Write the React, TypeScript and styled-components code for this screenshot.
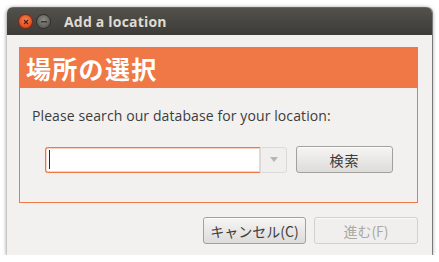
import React from "react";
import styled, { createGlobalStyle } from "styled-components";

const Global = createGlobalStyle`
  html, body {
    margin: 0;
    padding: 0;
    background: #ffffff;
    font-family: "Open Sans", "Noto Sans CJK JP", sans-serif;
  }
`;

const Window = styled.div`
  margin: 7px 0 0 7px;
  width: 425px;
  height: 248px;
  display: flex;
  flex-direction: column;
  border-radius: 6px 6px 0 0;
  box-shadow: 0 1px 4px rgba(0, 0, 0, 0.55), 1px 0 0 #9c9c9a;
  overflow: hidden;
`;

const TitleBar = styled.div`
  height: 28px;
  flex: none;
  display: flex;
  align-items: center;
  padding-left: 11px;
  background: linear-gradient(#52514c, #3c3b37);
  border-top: 1px solid #66655f;
  box-sizing: border-box;
`;

const WinButton = styled.div<{ $close?: boolean }>`
  width: 15px;
  height: 15px;
  border-radius: 50%;
  margin-right: 3px;
  display: flex;
  align-items: center;
  justify-content: center;
  box-sizing: border-box;
  border: 1px solid ${(p) => (p.$close ? "#7a2a12" : "#2e2d2a")};
  background: ${(p) =>
    p.$close
      ? "radial-gradient(circle at 50% 40%, #f58a5c, #df4a1c 70%)"
      : "radial-gradient(circle at 50% 40%, #8d8c86, #5f5e5a 70%)"};
`;

const Title = styled.span`
  margin-left: 10px;
  color: #dfdbd2;
  font-family: "Open Sans", sans-serif;
  font-weight: 700;
  font-size: 14px;
  letter-spacing: 0.2px;
`;

const Body = styled.div`
  flex: 1;
  background: #f2f1f0;
  padding: 12px 14px 13px 12px;
  display: flex;
  flex-direction: column;
`;

const Frame = styled.div`
  height: 154px;
  border: 1px solid #f07746;
  display: flex;
  flex-direction: column;
`;

const Header = styled.div`
  height: 40px;
  background: #f07746;
  color: #ffffff;
  font-family: "Noto Sans CJK JP", sans-serif;
  font-weight: 700;
  font-size: 25px;
  line-height: 40px;
  padding-left: 6px;
  letter-spacing: 1.3px;
`;

const Prompt = styled.div`
  margin: 19px 0 0 12px;
  font-size: 14px;
  line-height: 18px;
  letter-spacing: 0.1px;
  color: #3c3c3c;
`;

const SearchRow = styled.div`
  display: flex;
  align-items: center;
  margin: 21px 0 0 25px;
`;

const Combo = styled.div`
  display: flex;
  height: 26px;
`;

const Entry = styled.div`
  width: 215px;
  box-sizing: border-box;
  background: #ffffff;
  border: 1px solid #f07746;
  border-right: none;
  border-radius: 3px 0 0 3px;
  box-shadow: inset 0 0 0 1px rgba(240, 119, 70, 0.35);
  display: flex;
  align-items: center;
  padding-left: 3px;
`;

const Caret = styled.div`
  width: 1px;
  height: 19px;
  background: #2b2b2b;
`;

const DropButton = styled.div`
  width: 27px;
  box-sizing: border-box;
  border: 1px solid #dcdad6;
  border-radius: 0 3px 3px 0;
  background: #f0efed;
  display: flex;
  align-items: center;
  justify-content: center;
`;

const Arrow = styled.div`
  width: 0;
  height: 0;
  border-left: 4px solid transparent;
  border-right: 4px solid transparent;
  border-top: 5px solid #b8b6b2;
`;

const Button = styled.div<{ $width: number; $disabled?: boolean }>`
  width: ${(p) => p.$width}px;
  height: 27px;
  box-sizing: border-box;
  border-radius: 3px;
  display: flex;
  align-items: center;
  justify-content: center;
  font-family: "Noto Sans CJK JP", sans-serif;
  font-size: 14px;
  color: ${(p) => (p.$disabled ? "#a9a8a5" : "#3c3c3c")};
  border: 1px solid ${(p) => (p.$disabled ? "#d2d0cc" : "#a3a19d")};
  background: ${(p) =>
    p.$disabled
      ? "#f0efed"
      : "linear-gradient(#f6f5f4, #dedcda)"};
  box-shadow: inset 0 1px 0 rgba(255, 255, 255, 0.7);
`;

const SearchButton = styled(Button)`
  margin-left: 9px;
  letter-spacing: 1px;
`;

const Footer = styled.div`
  display: flex;
  justify-content: flex-end;
  gap: 8px;
  margin-top: 14px;
`;

export default function App() {
  return (
    <>
      <Global />
      <Window>
        <TitleBar>
          <WinButton $close>
            <svg width="6" height="6" viewBox="0 0 6 6">
              <path d="M1 1L5 5M5 1L1 5" stroke="#5a1a08" strokeWidth="1.2" />
            </svg>
          </WinButton>
          <WinButton>
            <svg width="6" height="2" viewBox="0 0 6 2">
              <rect x="0" y="0" width="6" height="1.5" fill="#3a3935" />
            </svg>
          </WinButton>
          <Title>Add a location</Title>
        </TitleBar>
        <Body>
          <Frame>
            <Header>場所の選択</Header>
            <Prompt>Please search our database for your location:</Prompt>
            <SearchRow>
              <Combo>
                <Entry>
                  <Caret />
                </Entry>
                <DropButton>
                  <Arrow />
                </DropButton>
              </Combo>
              <SearchButton $width={97}>検索</SearchButton>
            </SearchRow>
          </Frame>
          <Footer>
            <Button $width={103}>キャンセル(C)</Button>
            <Button $width={104} $disabled>
              進む(F)
            </Button>
          </Footer>
        </Body>
      </Window>
    </>
  );
}
